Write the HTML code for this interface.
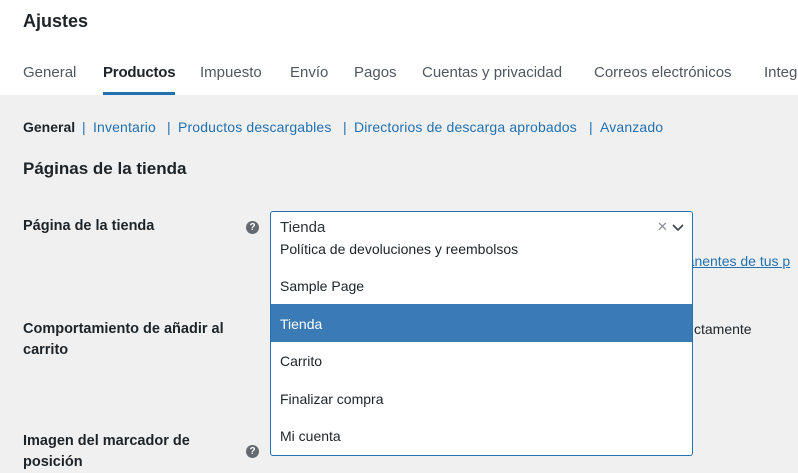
<!DOCTYPE html>
<html><head><style>
body{margin:0;width:798px;height:466px;overflow:hidden;background:#f0f0f1;font-family:"Liberation Sans",sans-serif;color:#1d2327;position:relative}
.hdr{position:absolute;left:0;top:0;width:798px;height:95px;background:#fff}
.t{position:absolute;white-space:nowrap}
.tab{top:64px;font-size:15px;color:#50575e}
.sub{top:119px;font-size:14px;color:#2271b1;letter-spacing:0.15px}
.lbl{font-size:14.5px;font-weight:bold;line-height:21px}
.q{position:absolute;width:13px;height:13px;border-radius:50%;background:#646970;color:#fff;font-size:10px;font-weight:bold;text-align:center;line-height:13px}
.dd{position:absolute;left:270px;top:211px;width:421px;height:243px;background:#fff;border:1px solid #2271b1;border-radius:3px;overflow:hidden}
.opt{position:absolute;left:9px;font-size:14px;color:#1d2327}
</style></head><body>
<div class="hdr"></div>
<div class="t" style="left:23px;top:11px;font-size:18px;font-weight:bold">Ajustes</div>
<div class="t tab" style="left:23px">General</div>
<div class="t tab" style="left:103px;color:#1d2327;font-weight:bold;letter-spacing:-0.2px">Productos</div>
<div style="position:absolute;left:103px;top:92px;width:72px;height:3px;background:#2271b1"></div>
<div class="t tab" style="left:200px">Impuesto</div>
<div class="t tab" style="left:290px">Envío</div>
<div class="t tab" style="left:354px">Pagos</div>
<div class="t tab" style="left:422px">Cuentas y privacidad</div>
<div class="t tab" style="left:594px">Correos electrónicos</div>
<div class="t tab" style="left:764px">Integ</div>
<div class="t sub" style="left:23px;color:#1d2327;font-weight:bold;letter-spacing:0">General</div>
<div class="t sub" style="left:82px">|</div>
<div class="t sub" style="left:93px">Inventario</div>
<div class="t sub" style="left:167px">|</div>
<div class="t sub" style="left:178px">Productos descargables</div>
<div class="t sub" style="left:343px">|</div>
<div class="t sub" style="left:354px">Directorios de descarga aprobados</div>
<div class="t sub" style="left:589px">|</div>
<div class="t sub" style="left:600px">Avanzado</div>
<div class="t" style="left:23px;top:159px;font-size:17px;font-weight:bold">Páginas de la tienda</div>
<div class="t lbl" style="left:23px;top:216px">Página de la tienda</div>
<div class="q" style="left:246px;top:221px">?</div>
<div class="t lbl" style="left:23px;top:319px">Comportamiento de añadir al<br>carrito</div>
<div class="t lbl" style="left:23px;top:431px">Imagen del marcador de<br>posición</div>
<div class="q" style="left:246px;top:445px">?</div>
<div class="t" style="left:675px;top:253px;font-size:14px;color:#2271b1;text-decoration:underline">manentes de tus p</div>
<div class="t" style="left:694px;top:321px;font-size:14px">ctamente</div>
<div class="dd">
<div class="opt" style="top:7px;font-size:15px;color:#2c3338">Tienda</div>
<div class="opt" style="top:7px;left:386px;color:#8c8f94;font-size:13px">✕</div>
<svg style="position:absolute;left:401px;top:12px" width="12" height="8" viewBox="0 0 12 8"><path d="M1 1l5 5 5-5" fill="none" stroke="#3c434a" stroke-width="1.6"/></svg>
<div class="opt" style="top:29px">Política de devoluciones y reembolsos</div>
<div class="opt" style="top:66px">Sample Page</div>
<div style="position:absolute;left:0;top:92px;width:421px;height:38px;background:#3a7ab5"></div>
<div class="opt" style="top:104px;color:#fff">Tienda</div>
<div class="opt" style="top:141px">Carrito</div>
<div class="opt" style="top:179px">Finalizar compra</div>
<div class="opt" style="top:216px">Mi cuenta</div>
</div>
</body></html>
